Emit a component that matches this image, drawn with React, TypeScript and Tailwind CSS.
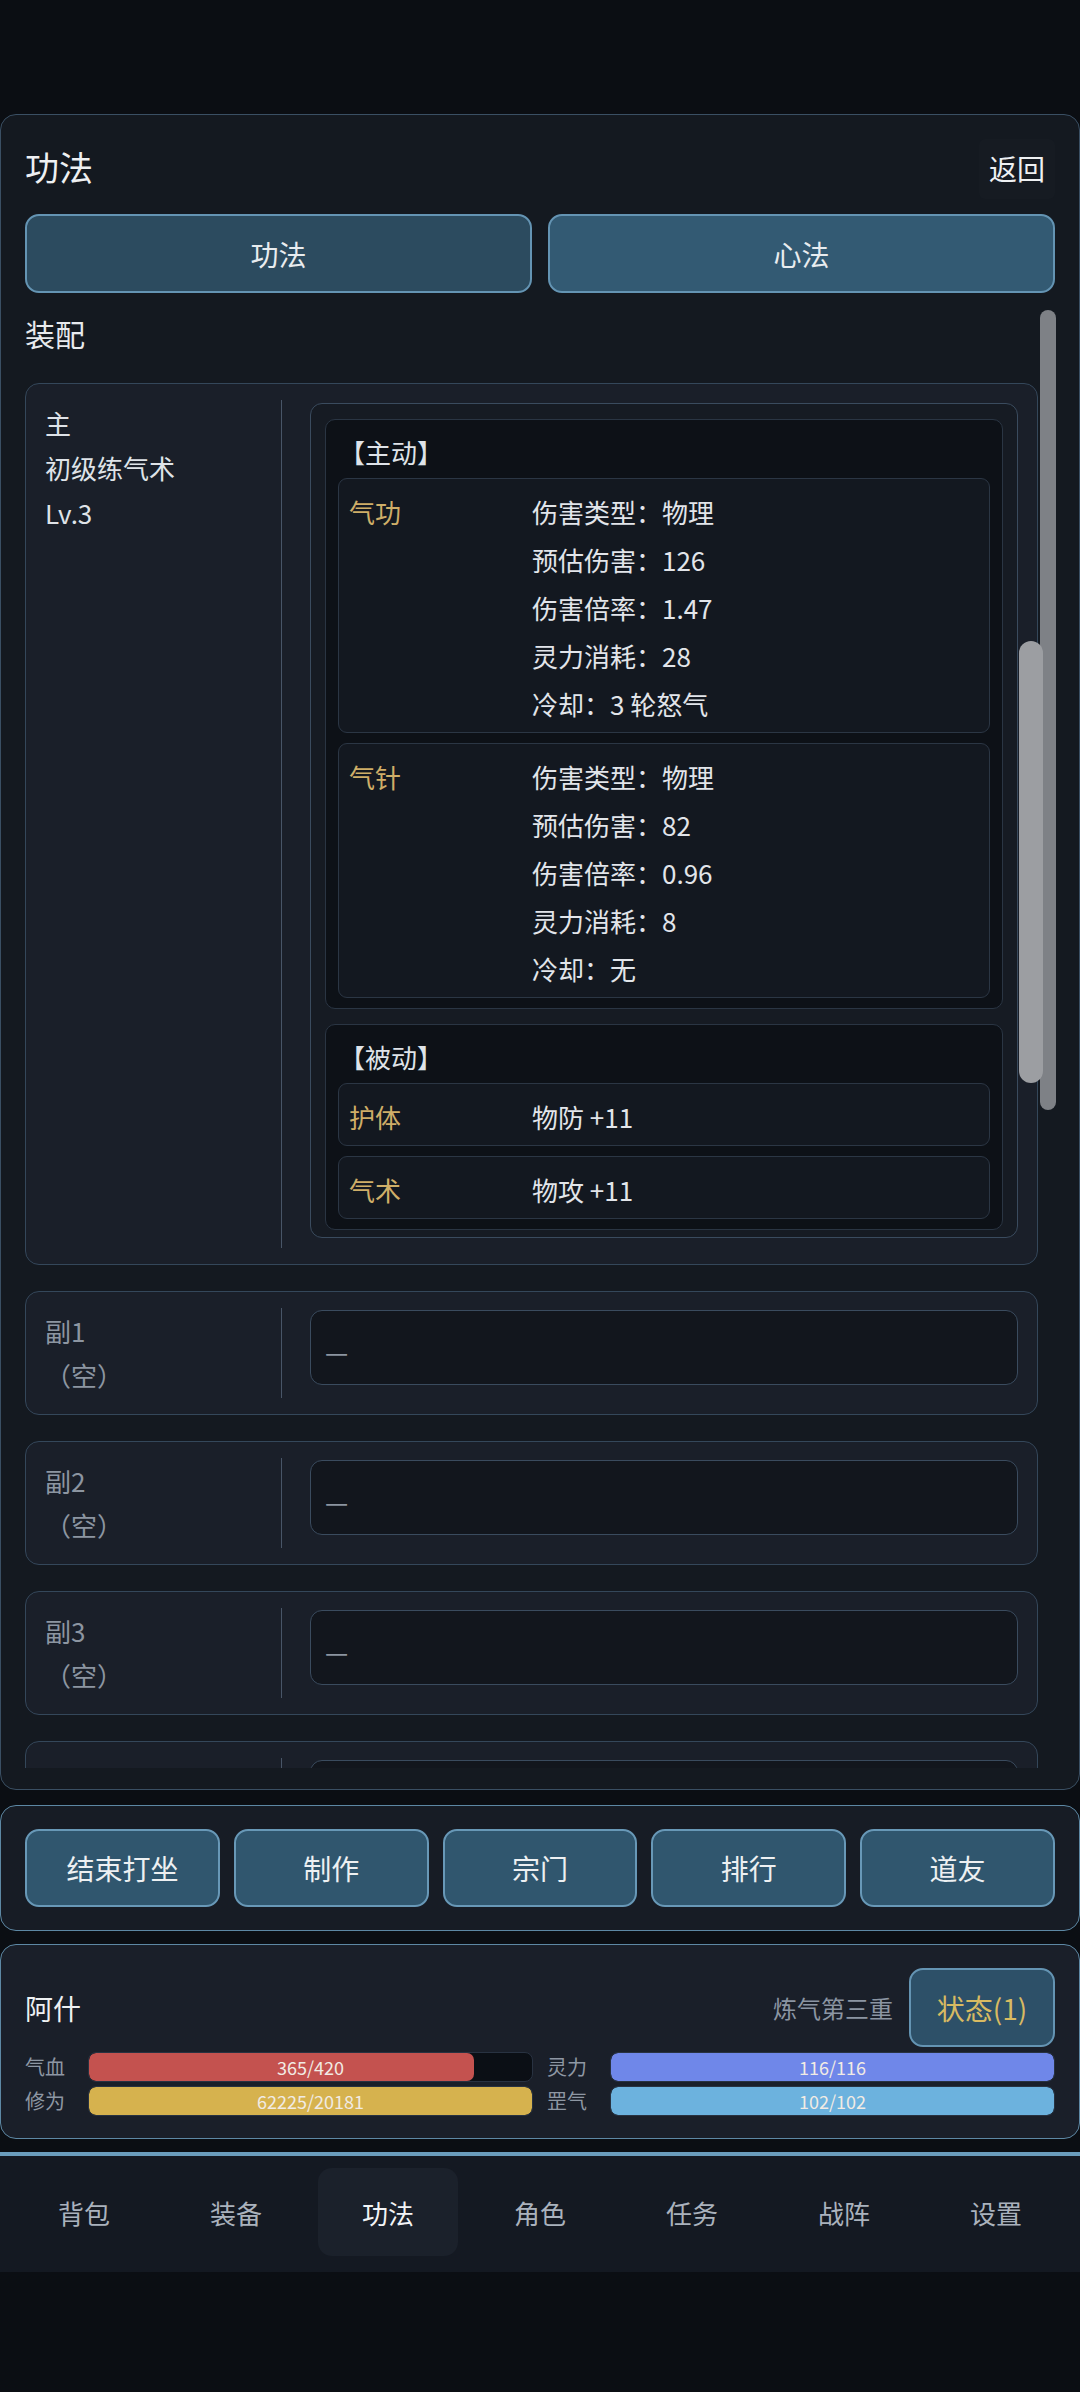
import React from "react"

type Skill = { name: string; lines: string[] }

const activeSkills: Skill[] = [
    {
        name: "气功",
        lines: ["伤害类型：物理", "预估伤害：126", "伤害倍率：1.47", "灵力消耗：28", "冷却：3 轮怒气"],
    },
    {
        name: "气针",
        lines: ["伤害类型：物理", "预估伤害：82", "伤害倍率：0.96", "灵力消耗：8", "冷却：无"],
    },
]

const passiveSkills: Skill[] = [
    { name: "护体", lines: ["物防 +11"] },
    { name: "气术", lines: ["物攻 +11"] },
]

const subSlots = ["副1", "副2", "副3", "副4"]

const actions = ["结束打坐", "制作", "宗门", "排行", "道友"]

const navTabs = ["背包", "装备", "功法", "角色", "任务", "战阵", "设置"]

function SkillCard({ skill }: { skill: Skill }) {
    return (
        <div className="flex rounded-[9px] border border-[#2b3644] bg-[#131820] pt-[9px] pb-[4px] pl-[10px] text-[26px] leading-[48px]">
            <div className="w-[183px] shrink-0 text-[#cfae68]">{skill.name}</div>
            <div className="flex flex-col text-[#e2e5ea]">
                {skill.lines.map((line) => (
                    <div key={line}>{line}</div>
                ))}
            </div>
        </div>
    )
}

function SkillGroup({ title, skills }: { title: string; skills: Skill[] }) {
    return (
        <div className="rounded-[10px] border border-[#2a3543] bg-[#0d1117] px-[12px] pt-[13px] pb-[10px]">
            <div className="h-[40px] pl-[1px] text-[26px] leading-[38px] text-[#dfe3e8]">{title}</div>
            <div className="mt-[5px] flex flex-col gap-[10px]">
                {skills.map((s) => (
                    <SkillCard key={s.name} skill={s} />
                ))}
            </div>
        </div>
    )
}

function Bar({ label, value, max, color }: { label: string; value: number; max: number; color: string }) {
    const pct = Math.min(100, (value / max) * 100)
    return (
        <div className="flex h-[30px] items-center">
            <div className="w-[63px] shrink-0 text-[20px] text-[#8e97a3]">{label}</div>
            <div className="relative h-full flex-1 overflow-hidden rounded-[8px] border border-[#283241] bg-[#0b0f15]">
                <div className={`h-full rounded-[7px] ${color}`} style={{ width: `${pct}%` }} />
                <div className="absolute inset-0 flex items-center justify-center text-[18px] text-[#f1ebe4]">
                    {value}/{max}
                </div>
            </div>
        </div>
    )
}

export default function App() {
    return (
        <div className="flex h-[2392px] w-[1080px] flex-col bg-[#0b0e13] pt-[114px] font-['Noto_Sans_CJK_SC',sans-serif] text-[#e4e7eb]">
            {/* Main technique panel */}
            <section className="relative rounded-[16px] border border-[#3a4f63] bg-[#141920] px-[24px] pt-[19px] pb-[21px]">
                <div className="flex h-[70px] items-center justify-between">
                    <h1 className="pb-[6px] text-[34px] text-[#eef0f2]">功法</h1>
                    <button className="flex h-[60px] items-center rounded-[6px] bg-[#161b22] px-[10px] pb-[2px] text-[28px] text-[#eef0f2]">
                        返回
                    </button>
                </div>

                <div className="mt-[10px] grid grid-cols-2 gap-[16px]">
                    <button className="h-[79px] rounded-[14px] border-2 border-[#6494b3] bg-[#2c4b5f] text-[28px] text-[#e8ecef]">
                        功法
                    </button>
                    <button className="h-[79px] rounded-[14px] border-2 border-[#6494b3] bg-[#335a73] text-[28px] text-[#e8ecef]">
                        心法
                    </button>
                </div>

                <div className="mt-[20px] h-[40px] text-[30px] leading-[40px] text-[#e8eaed]">装配</div>

                <div className="mt-[30px] mr-[17px] flex h-[1385px] flex-col gap-[26px] overflow-hidden">
                    {/* Main slot */}
                    <div className="flex shrink-0 rounded-[14px] border border-[#34475a] bg-[#1a1f29] px-[19px] py-[16px]">
                        <div className="w-[237px] shrink-0 border-r border-[#485567] text-[26px] leading-[45px] text-[#dfe3e8]">
                            <div>主</div>
                            <div>初级练气术</div>
                            <div>Lv.3</div>
                        </div>
                        <div className="mt-[3px] mb-[10px] ml-[28px] flex-1 rounded-[12px] border border-[#3a4b5e] bg-[#161b23] px-[14px] pt-[15px] pb-[7px]">
                            <div className="flex flex-col gap-[15px]">
                                <SkillGroup title="【主动】" skills={activeSkills} />
                                <SkillGroup title="【被动】" skills={passiveSkills} />
                            </div>
                        </div>
                    </div>

                    {/* Empty sub slots */}
                    {subSlots.map((slot) => (
                        <div
                            key={slot}
                            className="flex h-[124px] shrink-0 rounded-[14px] border border-[#34475a] bg-[#1a1f29] px-[19px] py-[16px]"
                        >
                            <div className="h-[90px] w-[237px] shrink-0 border-r border-[#485567] pt-[1px] text-[26px] leading-[44px] text-[#8c95a1]">
                                <div>{slot}</div>
                                <div>（空）</div>
                            </div>
                            <div className="mt-[2px] ml-[28px] flex h-[75px] flex-1 items-center rounded-[12px] border border-[#3a4b5e] bg-[#12161d] px-[14px] pt-[6px] text-[26px] text-[#8c95a1]">
                                —
                            </div>
                        </div>
                    ))}
                </div>

                {/* scrollbars */}
                <div className="absolute top-[195px] left-[1039px] h-[800px] w-[16px] rounded-full bg-[#7e8186]" />
                <div className="absolute top-[526px] left-[1018px] h-[442px] w-[24px] rounded-full bg-[#9c9ea2]" />
            </section>

            {/* Quick actions */}
            <section className="mt-[15px] rounded-[16px] border border-[#5d88a4] bg-[#171c25] px-[24px] py-[23px]">
                <div className="grid grid-cols-5 gap-[14px]">
                    {actions.map((a) => (
                        <button
                            key={a}
                            className="h-[78px] rounded-[14px] border-2 border-[#6898b7] bg-[#30566e] text-[28px] text-[#edf0f2]"
                        >
                            {a}
                        </button>
                    ))}
                </div>
            </section>

            {/* Character status */}
            <section className="mt-[13px] rounded-[16px] border border-[#5d88a4] bg-[#1a1f29] px-[24px] pt-[23px] pb-[22px]">
                <div className="flex h-[79px] items-center justify-between">
                    <div className="text-[28px] text-[#eef0f2]">阿什</div>
                    <div className="flex items-center gap-[16px]">
                        <span className="text-[24px] text-[#8b95a2]">炼气第三重</span>
                        <button className="h-[79px] w-[146px] rounded-[14px] border-2 border-[#6494b3] bg-[#2d5068] text-[28px] text-[#d8ba62]">
                            状态(1)
                        </button>
                    </div>
                </div>
                <div className="mt-[5px] grid grid-cols-2 gap-x-[14px] gap-y-[4px]">
                    <Bar label="气血" value={365} max={420} color="bg-[#c4524f]" />
                    <Bar label="灵力" value={116} max={116} color="bg-[#6f87e9]" />
                    <Bar label="修为" value={62225} max={20181} color="bg-[#d6b24e]" />
                    <Bar label="罡气" value={102} max={102} color="bg-[#6cb2de]" />
                </div>
            </section>

            {/* Bottom navigation */}
            <nav className="mt-[13px] grid h-[120px] grid-cols-7 border-t-4 border-[#6a9cbc] bg-[#141922] px-[8px] pt-[12px] pb-[16px]">
                {navTabs.map((t) => (
                    <div key={t} className="flex justify-center">
                        <div
                            className={
                                t === "功法"
                                    ? "flex h-[88px] w-[140px] items-center justify-center rounded-[14px] bg-[#1b212b] text-[26px] text-[#f2f4f6]"
                                    : "flex h-[88px] w-[140px] items-center justify-center text-[26px] text-[#aab2bd]"
                            }
                        >
                            {t}
                        </div>
                    </div>
                ))}
            </nav>
        </div>
    )
}
